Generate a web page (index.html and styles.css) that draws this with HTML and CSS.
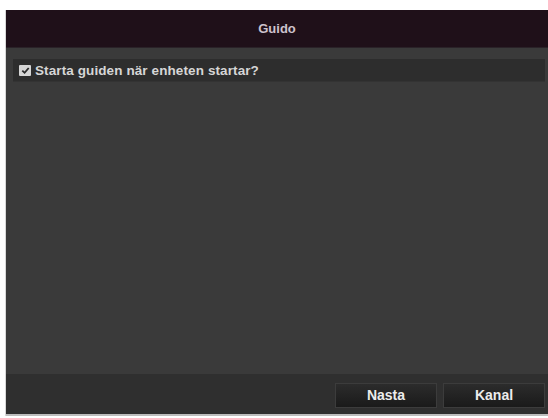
FILE: index.html
```html
<!DOCTYPE html>
<html>
<head>
<meta charset="utf-8">
<link rel="stylesheet" href="styles.css">
</head>
<body>
<div class="window">
  <div class="header">Guido</div>
  <div class="content">
    <div class="row">
      <span class="check">
        <svg width="11" height="11" viewBox="0 0 11 11"><path d="M2.3 5.6 L4.6 7.8 L8.7 3" fill="none" stroke="#2a2a2a" stroke-width="1.8"/></svg>
      </span>
      <span class="label">Starta guiden när enheten startar?</span>
    </div>
  </div>
  <div class="footer">
    <button class="btn">Nasta</button>
    <button class="btn">Kanal</button>
  </div>
</div>
</body>
</html>
```
FILE: styles.css
```css
html, body {
  margin: 0;
  padding: 0;
  background: #ffffff;
}
body {
  width: 548px;
  height: 418px;
  overflow: hidden;
  font-family: "Liberation Sans", Arial, sans-serif;
}
.window {
  margin: 10px 0 0 5px;
  width: 543px;
  height: 406px;
  display: flex;
  flex-direction: column;
  background: #3a3a3a;
  border-left: 1px solid #d8d8d8;
  box-sizing: border-box;
}
.header {
  height: 38px;
  flex: none;
  background: #1f1019;
  color: #cdc3cd;
  font-size: 13px;
  font-weight: bold;
  display: flex;
  align-items: center;
  justify-content: center;
  border-bottom: 1px solid #2a2228;
  box-sizing: border-box;
}
.content {
  flex: 1;
  padding: 11px 3px 0 7px;
  background: #3a3a3a;
}
.row {
  height: 22px;
  background: #2d2d2d;
  display: flex;
  align-items: center;
  padding-left: 6px;
  gap: 4px;
  border-bottom: 1px solid #333;
}
.check {
  width: 12px;
  height: 11px;
  background: #d6d6d6;
  border-radius: 1px;
  display: flex;
  align-items: center;
  justify-content: center;
}
.label {
  color: #d6d6d6;
  font-size: 13.5px;
  font-weight: bold;
  letter-spacing: 0.1px;
}
.footer {
  height: 42px;
  flex: none;
  background: #2f2f2f;
  display: flex;
  align-items: center;
  justify-content: flex-end;
  gap: 6px;
  padding-right: 3px;
  box-sizing: border-box;
  border-bottom: 2px solid #bdbdbd;
}
.btn {
  width: 102px;
  height: 25px;
  border: 1px solid #3c3c3c;
  background: linear-gradient(#2c2c2c, #1a1a1a);
  color: #ececec;
  font-family: "Liberation Sans", Arial, sans-serif;
  font-size: 14px;
  font-weight: bold;
  padding: 0;
  margin-top: 2px;
}
```
